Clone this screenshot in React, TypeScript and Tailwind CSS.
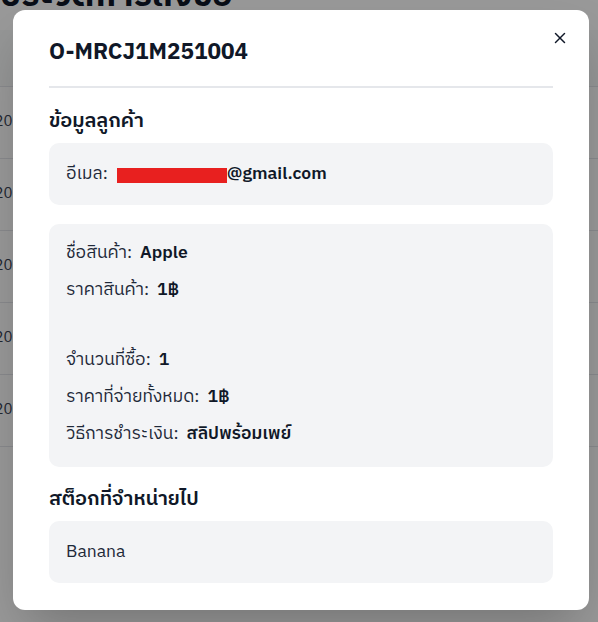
import { X } from 'lucide-react';

const rows = [
  { id: '251004', name: 'Apple' },
  { id: '251003', name: 'Apple' },
  { id: '251002', name: 'Apple' },
  { id: '251001', name: 'Apple' },
  { id: '251000', name: 'Apple' },
];

function Field({ label, value }: { label: string; value: string }) {
  return (
    <p className="leading-6">
      <span className="text-gray-800">{label}:</span>
      <span className="ml-2 font-semibold text-gray-900">{value}</span>
    </p>
  );
}

export default function App() {
  return (
    <div
      className="relative h-[622px] w-[598px] overflow-hidden bg-white"
      style={{ fontFamily: '"IBM Plex Sans Thai", "Noto Sans Thai", "Noto Sans", "DejaVu Sans", sans-serif' }}
    >
      {/* page behind the dialog */}
      <div className="-mt-[24px] -ml-[60px]">
        <h1 className="px-[60px] text-[34px] font-bold leading-[40px] text-gray-900">ประวัติการสั่งซื้อ</h1>
        <table className="mt-[14px] w-[760px] text-[15px] text-gray-700">
          <thead>
            <tr className="h-[56px] border-b border-gray-200 bg-gray-50 text-left">
              <th className="px-4 font-semibold">วันที่สั่ง</th>
              <th className="px-4 font-semibold">เลขที่สั่งซื้อ</th>
              <th className="px-4 font-semibold">ชื่อสินค้า</th>
            </tr>
          </thead>
          <tbody>
            {rows.map((r) => (
              <tr key={r.id} className="h-[72px] border-b border-gray-200">
                <td className="px-4">4/10/2025</td>
                <td className="px-4">O-MRCJ1M{r.id}</td>
                <td className="px-4">ดูรายละเอียด</td>
              </tr>
            ))}
          </tbody>
        </table>
      </div>

      {/* overlay */}
      <div className="absolute inset-0 bg-black/40" />

      {/* dialog */}
      <div className="absolute left-[13px] top-[10px] w-[576px] rounded-xl bg-white px-9 pb-[27px] pt-[27px] shadow-2xl">
        <button className="absolute right-[20px] top-[19px] text-gray-900">
          <X className="h-[18px] w-[18px]" strokeWidth={2} />
        </button>
        <h2 className="pb-[17px] text-[22.5px] font-bold leading-8 text-gray-900">O-MRCJ1M251004</h2>
        <div className="h-[2px] bg-gray-200" />

        <h3 className="mt-[20px] text-[20px] font-semibold leading-7 text-gray-900">ข้อมูลลูกค้า</h3>
        <div className="mt-[7px] flex h-[62px] items-center rounded-[10px] bg-gray-100 px-[17px] text-[17.5px]">
          <span className="text-gray-800">อีเมล:</span>
          <span className="ml-[9px] font-semibold text-gray-900">
            <span className="inline-block h-[15px] w-[110px] translate-y-[1px] bg-[#e8201f] align-middle" />
            @gmail.com
          </span>
        </div>

        <div className="mt-[19px] flex flex-col gap-[13px] rounded-[10px] bg-gray-100 px-[17px] pb-[21px] pt-[17px] text-[17.5px]">
          <Field label="ชื่อสินค้า" value="Apple" />
          <Field label="ราคาสินค้า" value="1฿" />
          <div className="h-[20px]" />
          <Field label="จำนวนที่ซื้อ" value="1" />
          <Field label="ราคาที่จ่ายทั้งหมด" value="1฿" />
          <Field label="วิธีการชำระเงิน" value="สลิปพร้อมเพย์" />
        </div>

        <h3 className="mt-[19px] text-[20px] font-semibold leading-7 text-gray-900">สต็อกที่จำหน่ายไป</h3>
        <div className="mt-[7px] flex h-[62px] items-center rounded-[10px] bg-gray-100 px-[17px] text-[17.5px] text-gray-800">
          Banana
        </div>
      </div>
    </div>
  );
}
